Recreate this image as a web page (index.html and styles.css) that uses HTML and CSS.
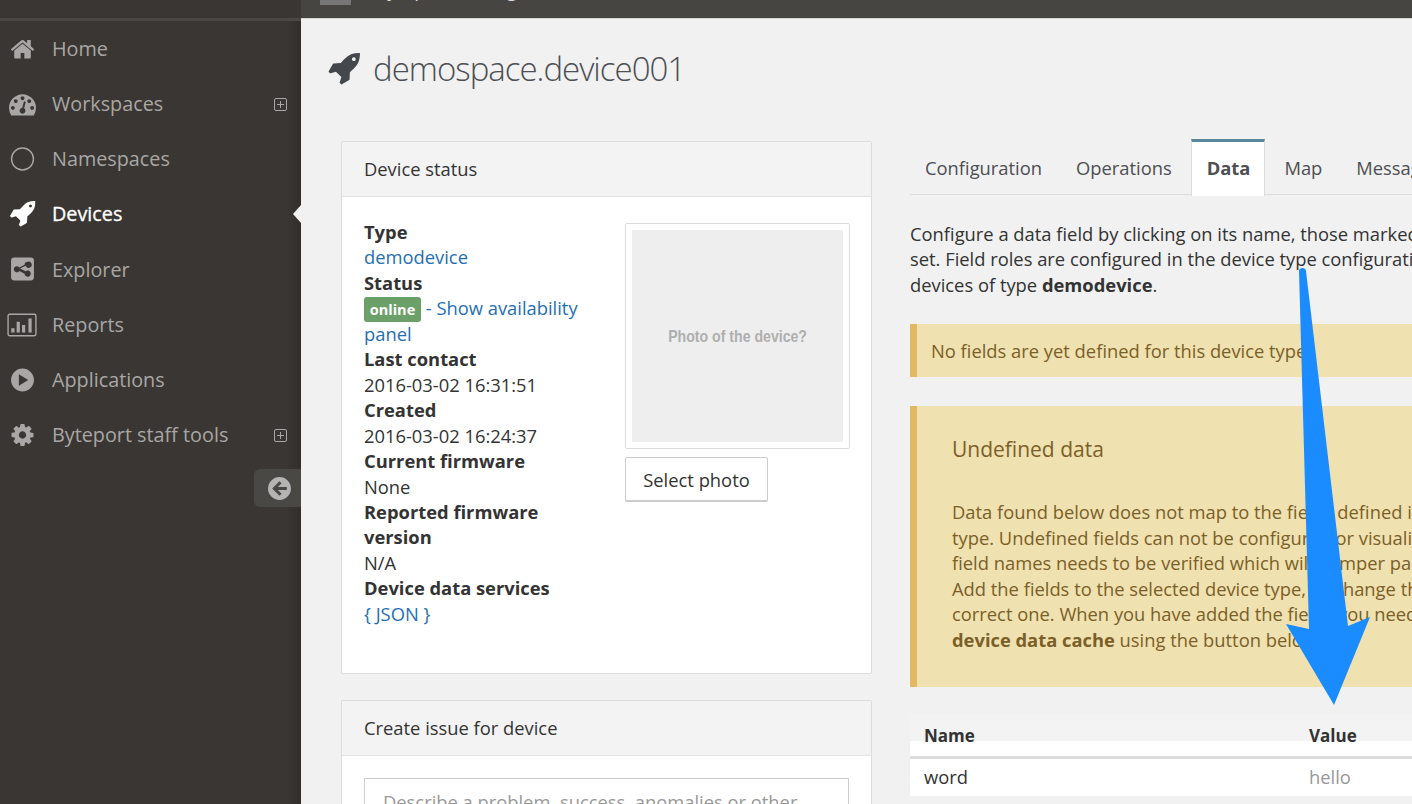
FILE: index.html
```html
<!DOCTYPE html>
<html lang="en">
<head>
    <meta charset="UTF-8">
    <title>demospace.device001</title>
    <link rel="stylesheet" href="styles.css">
</head>
<body>
<div class="page">
    <aside class="side">
        <div class="side-top"></div>
        <ul class="nav">
            <li><svg class="ico" viewBox="-44 -24 1878 1808"><path d="M1472 992v480q0 26-19 45t-45 19h-384v-384h-256v384h-384q-26 0-45-19t-19-45v-480q0-1 .5-3t.5-3l575-474 575 474q1 2 1 6zm223-69l-62 74q-8 9-21 11h-3q-13 0-21-7l-692-577-692 577q-12 8-24 7-13-2-21-11l-62-74q-8-10-7-23.500t11-21.500l719-599q32-26 76-26t76 26l244 204v-195q0-14 9-23t23-9h192q14 0 23 9t9 23v408l219 182q10 8 11 21.500t-7 23.500z"/></svg><a href="javascript:;">Home</a></li>
            <li><svg class="ico" viewBox="0 33 1792 1726"><path d="M384 1152q0-53-37.500-90.500t-90.500-37.500-90.500 37.500-37.500 90.500 37.500 90.500 90.500 37.500 90.500-37.500 37.500-90.500zm192-448q0-53-37.500-90.500t-90.500-37.500-90.500 37.500-37.500 90.500 37.500 90.500 90.500 37.500 90.500-37.500 37.500-90.500zm428 481l101-382q6-26-7.500-48.500t-38.500-29.500-48 6.500-30 39.500l-101 382q-60 5-107 43.500t-63 98.500q-20 77 20 146t117 89 146-20 89-117q16-60-6-117t-72-91zm660-33q0-53-37.500-90.500t-90.500-37.500-90.500 37.500-37.500 90.500 37.500 90.500 90.500 37.500 90.500-37.500 37.500-90.500zm-640-640q0-53-37.500-90.500t-90.500-37.500-90.500 37.500-37.500 90.500 37.500 90.500 90.500 37.500 90.500-37.500 37.500-90.500zm448 192q0-53-37.500-90.500t-90.500-37.500-90.500 37.500-37.500 90.500 37.500 90.500 90.500 37.500 90.500-37.500 37.500-90.500zm320 448q0 261-141 483-19 29-54 29h-1402q-35 0-54-29-141-221-141-483 0-182 71-348t191-286 286-191 348-71 348 71 286 191 191 286 71 348z"/></svg><a href="javascript:;">Workspaces</a><span class="plus"></span></li>
            <li><svg class="ico" viewBox="0 0 24 24"><circle cx="12" cy="12" r="10.100" fill="none" stroke="currentColor" stroke-width="1.300"/></svg><a href="javascript:;">Namespaces</a></li>
            <li class="on"><svg class="ico" viewBox="0 0 24 24"><use href="#rocket"/></svg><a href="javascript:;">Devices</a></li>
            <li><svg class="ico" viewBox="-.5 -.5 25 25"><path fill-rule="evenodd" d="M4 1h16a3 3 0 0 1 3 3v16a3 3 0 0 1-3 3H4a3 3 0 0 1-3-3V4a3 3 0 0 1 3-3zm13 4a3 3 0 0 0-3 3l-5 2.500a3 3 0 1 0 0 3.500l5 2.500a3 3 0 1 0 1-2.300l-5-2.400v-.5l5-2.400A3 3 0 1 0 17 5z"/></svg><a href="javascript:;">Explorer</a></li>
            <li><svg class="ico wide" viewBox="0 0 28 22"><rect x="1" y="1" width="26" height="20" rx="1.500" fill="none" stroke="currentColor" stroke-width="1.300"/><path d="M4 14h3v4H4zM9 8h3v10H9zM14 11h3v7h-3zM20 5h3v13h-3z"/></svg><a href="javascript:;">Reports</a></li>
            <li><svg class="ico" viewBox="-.5 -.5 25 25"><path fill-rule="evenodd" d="M12 1a11 11 0 1 1 0 22 11 11 0 0 1 0-22zM8.500 6.500v11l9-5.500z"/></svg><a href="javascript:;">Applications</a></li>
            <li><svg class="ico" viewBox="-49 -14 1890 1820"><path d="M1152 896q0-106-75-181t-181-75-181 75-75 181 75 181 181 75 181-75 75-181zm512-109v222q0 12-8 23t-20 13l-185 28q-19 54-39 91 35 50 107 138 10 12 10 25t-9 23q-27 37-99 108t-94 71q-12 0-26-9l-138-108q-44 23-91 38-16 136-29 186-7 28-36 28h-222q-14 0-24.500-8.500t-11.500-21.500l-28-184q-49-16-90-37l-141 107q-10 9-25 9-14 0-25-11-126-114-165-168-7-10-7-23 0-12 8-23 15-21 51-66.500t54-70.500q-27-50-41-99l-183-27q-13-2-21-12.500t-8-23.500v-222q0-12 8-23t19-13l186-28q14-46 39-92-40-57-107-138-10-12-10-24 0-10 9-23 26-36 98.500-107.500t94.500-71.500q13 0 26 10l138 107q44-23 91-38 16-136 29-186 7-28 36-28h222q14 0 24.500 8.500t11.500 21.500l28 184q49 16 90 37l142-107q9-9 24-9 13 0 25 10 129 119 165 170 7 8 7 22 0 12-8 23-15 21-51 66.500t-54 70.500q26 50 41 98l183 28q13 2 21 12.500t8 23.500z"/></svg><a href="javascript:;">Byteport staff tools</a><span class="plus"></span></li>
        </ul>
        <div class="collapse"><svg viewBox="0 0 24 24"><path fill-rule="evenodd" d="M12 1a11 11 0 1 1 0 22 11 11 0 0 1 0-22zM12 5l-7 7 7 7 2-2-3.500-3.500H19v-3h-8.500L14 7z"/></svg></div>
    </aside>
    <main class="main">
        <header class="top"><span class="top-logo"></span><span class="top-name">Byteport Manager</span></header>
        <h1 class="title"><svg viewBox="0 0 24 24"><use href="#rocket"/></svg>demospace.device001</h1>
        <div class="cols">
            <div class="left">
                <section class="panel status">
                    <h2>Device status</h2>
                    <div class="status-body">
                        <div class="facts">
                            <b>Type</b><br>
                            <a href="javascript:;">demodevice</a><br>
                            <b>Status</b><br>
                            <span class="badge">online</span> <a href="javascript:;">- Show availability</a> <a href="javascript:;">panel</a><br>
                            <b>Last contact</b><br>
                            2016-03-02 16:31:51<br>
                            <b>Created</b><br>
                            2016-03-02 16:24:37<br>
                            <b>Current firmware</b><br>
                            None<br>
                            <b>Reported firmware version</b><br>
                            N/A<br>
                            <b>Device data services</b><br>
                            <a href="javascript:;">{ JSON }</a>
                        </div>
                        <div class="photo">
                            <div class="frame"><div class="holder"><span>Photo of the device?</span></div></div>
                            <button class="btn">Select photo</button>
                        </div>
                    </div>
                </section>
                <section class="panel issue">
                    <h2>Create issue for device</h2>
                    <div class="issue-body"><div class="area">Describe a problem, success, anomalies or other</div></div>
                </section>
            </div>
            <div class="right">
                <ul class="tabs">
                    <li>Configuration</li>
                    <li>Operations</li>
                    <li class="on">Data</li>
                    <li>Map</li>
                    <li>Messages</li>
                </ul>
                <p class="intro">Configure a data field by clicking on its name, those marked with a star are<br>set. Field roles are configured in the device type configuration and apply to all<br>devices of type <b>demodevice</b>.</p>
                <div class="note small">No fields are yet defined for this device type</div>
                <div class="note big">
                    <h3>Undefined data</h3>
                    <p>Data found below does not map to the fields defined in the device<br>type. Undefined fields can not be configured or visualized and the<br>field names needs to be verified which will hamper parts of the UI.<br>Add the fields to the selected device type, or change the type to the<br>correct one. When you have added the fields you need, clear the<br><b>device data cache</b> using the button below.</p>
                </div>
                <table class="data">
                    <tr><th class="c1">Name</th><th>Value</th></tr>
                    <tr><td class="c1">word</td><td class="val">hello</td></tr>
                </table>
            </div>
        </div>
    </main>
</div>
<svg class="arrow" viewBox="0 0 1412 804"><path d="M1299 271c0-4 7-4 7 0l42 355 22-9-36 88-48-81 23 5z"/></svg>
<svg class="defs">
    <symbol id="rocket" viewBox="64 128 1664 1664"><path fill-rule="evenodd" d="M1504 448q0-40-28-68t-68-28-68 28-28 68 28 68 68 28 68-28 28-68zm224-288q0 249-75.500 430.500t-253.500 360.500q-81 80-195 176l-20 379q-2 16-16 26l-384 224q-7 4-16 4-12 0-23-9l-64-64q-13-14-8-32l85-276-281-281-276 85q-3 1-9 1-14 0-23-9l-64-64q-17-19-5-39l224-384q10-14 26-16l379-20q96-114 176-195 188-187 358-258t431-71q14 0 24 9.500t10 22.500z"/></symbol>
</svg>
</body>
</html>
```

FILE: styles.css
```css
*{
    margin:0;
    padding:0;
    list-style: none;
    text-decoration: none;
    box-sizing: border-box;
}
html,body{
    height: 100%;
    overflow: hidden;
}
body{
    font-family: "Open Sans", "Noto Sans", sans-serif;
    font-size: 18.35px;
    line-height: 25.45px;
    color: #333;
    background: #f1f1f1;
}
a{
    color: #1f6fb2;
}
.page{
    display: flex;
    height: 804px;
    width: 1412px;
    overflow: hidden;
}

/* sidebar */
.side{
    position: relative;
    width: 301px;
    flex: none;
    background: #3a3633;
    background-image: linear-gradient(to left, #312e2b, #3a3633 15px);
}
.side-top{
    height: 21px;
    border-bottom: 3px solid #4a4845;
    background: #3a3633;
}
.nav li{
    display: flex;
    align-items: center;
    height: 55.2px;
    color: #a8a7a5;
    font-size: 19.8px;
    position: relative;
}
.nav a{
    color: inherit;
}
.nav .ico{
    width: 27px;
    height: 26px;
    margin: 0 16px 0 9px;
    fill: currentColor;
    flex: none;
}
.nav .ico.wide{
    width: 30px;
    height: 24px;
    margin: 0 15px 0 7px;
}
.nav li.on{
    color: #fff;
}
.nav li.on a{
    -webkit-text-stroke: .3px #fff;
}
.nav li.on::after{
    content: "";
    position: absolute;
    right: 0;
    top: 50%;
    margin-top: -9px;
    border: 9px solid transparent;
    border-left-width: 0;
    border-right: 8px solid #f1f1f1;
}
.plus{
    position: absolute;
    right: 14px;
    top: 50%;
    margin-top: -6px;
    width: 13px;
    height: 13px;
    border: 1px solid #a8a7a5;
    border-radius: 2px;
    background:
        linear-gradient(#a8a7a5,#a8a7a5) center/7px 1px no-repeat,
        linear-gradient(#a8a7a5,#a8a7a5) center/1px 7px no-repeat;
}
.collapse{
    position: absolute;
    right: 0;
    top: 469px;
    width: 47px;
    height: 38px;
    background: #4a4845;
    border-radius: 6px 0 0 6px;
    display: flex;
    align-items: center;
    padding-left: 13px;
}
.collapse svg{
    width: 25px;
    height: 25px;
    fill: #b5b4b2;
}

/* main */
.main{
    flex: 1;
    min-width: 0;
}
.top{
    height: 19px;
    background: #474542;
    border-bottom: 1px solid #d5d5d5;
    display: flex;
    align-items: flex-end;
    overflow: hidden;
    padding-left: 19px;
}
.top-logo{
    width: 31px;
    height: 5px;
    margin-bottom: 13px;
    background: #777;
}
.top-name{
    margin: 0 0 15px 24px;
    color: #ddd;
    font-size: 19px;
    line-height: 25px;
    flex: none;
}
.title{
    display: flex;
    align-items: center;
    height: 100px;
    padding-left: 27px;
    font-size: 33px;
    font-weight: 300;
    color: #4c4f53;
    letter-spacing: -1px;
}
.title svg{
    width: 32px;
    height: 32px;
    margin-right: 13px;
    fill: #44474b;
}
.cols{
    display: flex;
    gap: 38px;
    padding: 22px 0 0 40px;
}
.left{
    width: 531px;
    flex: none;
}
.right{
    width: 640px;
    flex: none;
    margin-top: -2px;
}
.panel{
    background: #fff;
    border: 1px solid #dcdcdc;
    border-radius: 2px;
}
.panel h2{
    height: 55px;
    padding: 14px 22px;
    font-size: 18.35px;
    font-weight: 400;
    background: #f3f3f3;
    border-bottom: 1px solid #e2e2e2;
}
.status{
    height: 533px;
    margin-bottom: 26px;
}
.status-body{
    display: flex;
    justify-content: space-between;
    padding: 22px 21px 0 22px;
}
.facts{
    width: 232px;
}
.badge{
    display: inline-block;
    width: 57px;
    height: 25px;
    background: #6ca069;
    color: #fff;
    font-size: 14.5px;
    font-weight: 700;
    line-height: 25px;
    text-align: center;
    border-radius: 3px;
    vertical-align: top;
    transform: translateY(2px);
}
.photo{
    width: 225px;
    margin-top: 4px;
}
.frame{
    height: 226px;
    padding: 6px;
    border: 1px solid #dcdcdc;
    border-radius: 2px;
}
.holder{
    height: 100%;
    background: #eee;
    text-align: center;
    padding-top: 94px;
    font-family: "Liberation Sans", Arial, sans-serif;
    font-weight: 700;
    font-size: 17px;
    color: #aeaeae;
}
.holder span{
    display: inline-block;
    transform: scaleX(.83);
    white-space: nowrap;
}
.btn{
    display: block;
    width: 143px;
    height: 45px;
    margin-top: 8px;
    background: #fff;
    border: 1px solid #ccc;
    border-bottom-width: 2px;
    border-radius: 2px;
    font: 18.35px/25px "Open Sans", "Noto Sans", sans-serif;
    color: #333;
}
.issue-body{
    padding: 22px 22px 0;
}
.area{
    height: 100px;
    border: 1px solid #ccc;
    padding: 10px 18px;
    color: #999;
}

/* right column */
.tabs{
    display: flex;
    height: 56px;
    border-bottom: 1px solid #dcdcdc;
    margin-bottom: 26px;
}
.tabs li{
    padding: 16px 15px 0;
    margin-right: 4px;
    color: #4c4f53;
    white-space: nowrap;
}
.tabs li.on{
    background: #fff;
    border: 1px solid #dcdcdc;
    border-top: 3px solid #57889c;
    border-bottom: none;
    height: 57px;
    padding: 13px 14px 0 15px;
    font-weight: 700;
}
.intro{
    white-space: nowrap;
    margin-bottom: 27px;
}
.note{
    background: #efe1b0;
    border-left: 7px solid #e3b862;
    color: #7b5f28;
    white-space: nowrap;
}
.note.small{
    height: 53px;
    padding: 14px 14px;
    margin-bottom: 29px;
}
.note.big{
    height: 281px;
    padding: 28px 35px;
    margin-bottom: 27px;
}
.note h3{
    font-size: 21px;
    font-weight: 400;
    line-height: 30px;
    margin-bottom: 35px;
}
.data{
    width: 640px;
    border-collapse: collapse;
}
.data th{
    height: 43px;
    text-align: left;
    vertical-align: top;
    font-weight: 700;
    font-size: 17px;
    padding: 9px 0 0;
    background: linear-gradient(#f3f3f3 27px,#fff 27px);
    border-bottom: 3px solid #ddd;
}
.data td{
    height: 39px;
    padding-bottom: 2px;
    background: #fff;
}
.data .c1{
    width: 399px;
    padding-left: 14px;
}
.data .val{
    color: #999;
}

/* annotation drawn over the screenshot */
.arrow{
    position: absolute;
    left: 0;
    top: 0;
    width: 1412px;
    height: 804px;
    fill: #1a8cff;
    pointer-events: none;
}
.defs{
    position: absolute;
    width: 0;
    height: 0;
}
```
